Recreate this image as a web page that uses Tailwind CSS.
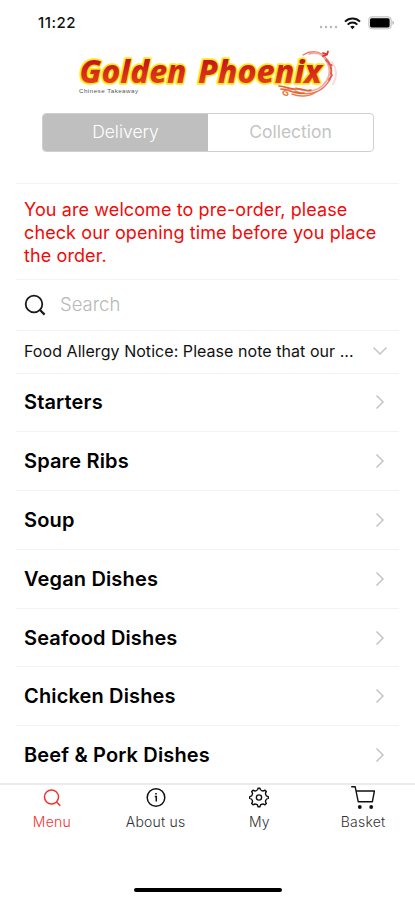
<!DOCTYPE html>
<html lang="en">

<head>
    <meta charset="UTF-8">
    <meta name="viewport" content="width=device-width, initial-scale=1.0">
    <script src="https://cdn.jsdelivr.net/npm/@tailwindcss/browser@4"></script>
    <title>Golden Phoenix</title>
</head>

<body class="bg-white font-[Inter,sans-serif] text-[#111]">
    <div class="h-[900px] w-[415px] overflow-hidden flex flex-col">
        <!-- Status bar -->
        <header class="h-[46px] shrink-0 flex items-center justify-between pl-[38px] pr-[20px]">
            <span class="text-[15px] font-medium tracking-[0.5px]">11:22</span>
            <div class="flex items-center">
                <svg class="w-[20px] h-[12px] mr-[5px]" viewBox="0 0 20 12" fill="#b5b5b5">
                    <circle cx="2" cy="10" r="1.2" />
                    <circle cx="7" cy="10" r="1.2" />
                    <circle cx="12" cy="10" r="1.2" />
                    <circle cx="17" cy="10" r="1.2" />
                </svg>
                <svg class="w-[17px] h-[13px] mr-[7px]" viewBox="0 0 17 13" fill="none" stroke="#111" stroke-width="2">
                    <path d="M1 4.6a10.7 10.7 0 0 1 15 0M3.7 7.6a6.8 6.8 0 0 1 9.6 0" />
                    <path d="M8.5 12.2 6.2 9.8a3.3 3.3 0 0 1 4.6 0z" fill="#111" stroke="none" />
                </svg>
                <svg class="w-[27px] h-[14px]" viewBox="0 0 27 14">
                    <rect x="0.7" y="0.7" width="22.6" height="12.2" rx="3.2" fill="#e4e4e4" stroke="#c8c8c8" />
                    <rect x="2" y="2.2" width="19.6" height="9.2" rx="1.6" fill="#000" />
                    <path d="M24.4 4.6c2.2 1 2.2 3.4 0 4.4z" fill="#bbb" />
                </svg>
            </div>
        </header>

        <!-- Logo -->
        <div class="h-[66px] shrink-0 pl-[70px]">
            <svg class="w-[280px] h-[60px]" viewBox="70 46 280 60">
                <defs>
                    <linearGradient id="flame" x1="0" y1="0" x2="0" y2="1">
                        <stop offset="0.3" stop-color="#c5161c" />
                        <stop offset="0.8" stop-color="#e3401b" />
                    </linearGradient>
                </defs>
                <g fill="none" stroke="#ea7a68" stroke-linecap="round">
                    <path d="M303 55c8-5 17-4 22 2 8 8 9 20 1 28-8 9-21 11-31 6" stroke-width="1.4" />
                    <path d="M309 54c7-2 13 0 16 5 6 8 6 18-1 25-7 8-18 9-28 4" stroke="#f3aca0" stroke-width="1.8" />
                    <path d="M323 56l4-1.5 1-3M326 54l-3-1" stroke="#d5322f" stroke-width="1.8" />
                    <path d="M326 60c4 3 6 8 5 14M329 64l3 1M329 80l3-5" stroke="#e2594e" stroke-width="1.8" />
                    <path d="M332 62c5 7 5 15 1 22" stroke="#fadbd6" stroke-width="2" />
                </g>
                <g font-family="'Noto Sans', sans-serif" font-weight="800" font-style="italic" font-size="32" fill="url(#flame)" stroke="#ffe818" stroke-width="3.4" stroke-linejoin="round" paint-order="stroke">
                    <text x="79.5" y="82.6" textLength="107" lengthAdjust="spacingAndGlyphs">Golden</text>
                    <text x="198" y="82.6" textLength="124" lengthAdjust="spacingAndGlyphs">Phoenix</text>
                </g>
                <!-- tail feathers, in front of the lettering -->
                <g fill="none" stroke-linecap="round">
                    <path d="M279 86c7 0 10 4 17 3s9 3 15 1M281 89c9 0 13 6 23 4" stroke="#e8602f" stroke-width="1.7" />
                    <path d="M289 90c-6 0-8 3-4 5 3 1 4-2 1-3M292 94c7 3 17 3 24-2" stroke="#ee7d45" stroke-width="1.5" />
                </g>
                <text x="79" y="93.4" font-family="'Liberation Sans', sans-serif" font-size="6.2" textLength="59" fill="#555">Chinese Takeaway</text>
            </svg>
        </div>

        <!-- Delivery / collection switch -->
        <div class="ml-[42px] w-[332px] h-[39px] mt-[1px] shrink-0 flex rounded-[4px] border border-[#cfcfcf] overflow-hidden text-[17.5px]">
            <button class="w-1/2 bg-[#bfbfbf] text-white font-light">Delivery</button>
            <button class="w-1/2 text-[#c4c4c4]">Collection</button>
        </div>

        <main class="mt-[31px] h-[600px] shrink-0 px-4 overflow-hidden">
            <p class="h-[96px] border-t border-[#f3f3f3] px-2 pt-[14px] text-[18px] leading-[23px] tracking-[0.1px] text-[#f00a0a] whitespace-nowrap">
                You are welcome to pre-order, please<br>
                check our opening time before you place<br>
                the order.
            </p>
            <div class="h-[51px] border-t border-[#f3f3f3] px-2 pb-px flex items-center">
                <svg class="w-[22px] h-[22px]" viewBox="0 0 22 22" fill="none" stroke="#1a1a1a" stroke-width="1.8">
                    <circle cx="10" cy="10" r="8.3" />
                    <path d="m16 16 4.6 4.6" stroke-width="2.2" />
                </svg>
                <span class="ml-[14px] text-[18.5px] font-light text-[#b8b8b8]">Search</span>
            </div>
            <div class="h-[42.5px] border-t border-[#f3f3f3] px-2 pb-px flex items-center justify-between text-base tracking-[0.05px]">
                <span class="whitespace-nowrap">Food Allergy Notice: Please note that our ...</span>
                <svg class="w-[16px] h-[10px] mr-[3px]" viewBox="0 0 16 10" fill="none" stroke="#c4c4c4" stroke-width="1.5">
                    <path d="m1.5 1.5 6.5 6.5 6.5-6.5" />
                </svg>
            </div>
            <ul id="categories" class="text-[20px] font-semibold tracking-[0.15px] text-black"></ul>
        </main>

        <!-- Bottom tabs -->
        <nav class="h-[117px] shrink-0 border-t-2 border-[#ebebeb] grid grid-cols-4 text-sm font-light tracking-[0.2px] text-[#333]">
            <a class="flex flex-col items-center text-[#f03434]">
                <svg class="w-6 h-[27px]" viewBox="0 0 24 27" fill="none" stroke="currentColor" stroke-width="1.5">
                    <circle cx="11.5" cy="12" r="7" />
                    <path d="m16.5 17 3.8 3.8" />
                </svg>
                <span>Menu</span>
            </a>
            <a class="flex flex-col items-center">
                <svg class="w-6 h-[27px]" viewBox="0 0 24 27" fill="none" stroke="#111" stroke-width="1.5">
                    <circle cx="12" cy="12.5" r="8.8" />
                    <path d="M10.8 11.5H12.3V16.6M11.2 8.8h1.6" />
                </svg>
                <span>About us</span>
            </a>
            <a class="flex flex-col items-center">
                <svg class="w-6 h-[27px]" viewBox="0 0 24 27" fill="none" stroke="#111" stroke-width="1.4" stroke-linejoin="round">
                    <path d="M9.2 5.7Q10.7 5.6 11.1 3.2h1.8Q13.3 5.6 14.8 5.7Q16 6.5 18 5.2L19.3 6.5Q18 8.5 18.8 9.7Q18.9 11.2 21.3 11.6v1.8Q18.9 13.8 18.8 15.3Q18 16.5 19.3 18.5L18 19.8Q16 18.5 14.8 19.3Q13.3 19.4 12.9 21.8h-1.8Q10.7 19.4 9.2 19.3Q8 18.5 6 19.8L4.7 18.5Q6 16.5 5.2 15.3Q5.1 13.8 2.7 13.4v-1.8Q5.1 11.2 5.2 9.7Q6 8.5 4.7 6.5L6 5.2Q8 6.5 9.2 5.7z" />
                    <circle cx="12" cy="12.5" r="2.6" />
                </svg>
                <span>My</span>
            </a>
            <a class="flex flex-col items-center">
                <svg class="w-[26px] h-[27px]" viewBox="0 0 26 27" fill="none" stroke="#111" stroke-width="1.4" stroke-linejoin="round">
                    <path d="M1.2 1.8h4l3 14.9h14.2l2-10.7H6.2" />
                    <circle cx="9.8" cy="22" r="1.9" fill="#111" stroke="none" />
                    <circle cx="21.2" cy="22" r="1.9" fill="#111" stroke="none" />
                </svg>
                <span>Basket</span>
            </a>
            <div class="col-span-4 mx-auto mt-auto mb-[8px] w-[148px] h-[4px] rounded-full bg-black"></div>
        </nav>
    </div>

    <script>
        var categories = ["Starters", "Spare Ribs", "Soup", "Vegan Dishes", "Seafood Dishes", "Chicken Dishes", "Beef & Pork Dishes"];
        var list = document.getElementById("categories");
        categories.forEach(function (name) {
            var row = document.createElement("li");
            row.className = "h-[58.8px] border-t border-[#f3f3f3] px-2 flex items-center justify-between";
            row.innerHTML = '<span></span><svg class="w-[10px] h-[16px] mr-[6px]" viewBox="0 0 10 16" fill="none" stroke="#c4c4c4" stroke-width="1.5"><path d="m1.5 1.5 6.5 6.5-6.5 6.5" /></svg>';
            row.firstChild.textContent = name;
            list.appendChild(row);
        });
    </script>
</body>

</html>
